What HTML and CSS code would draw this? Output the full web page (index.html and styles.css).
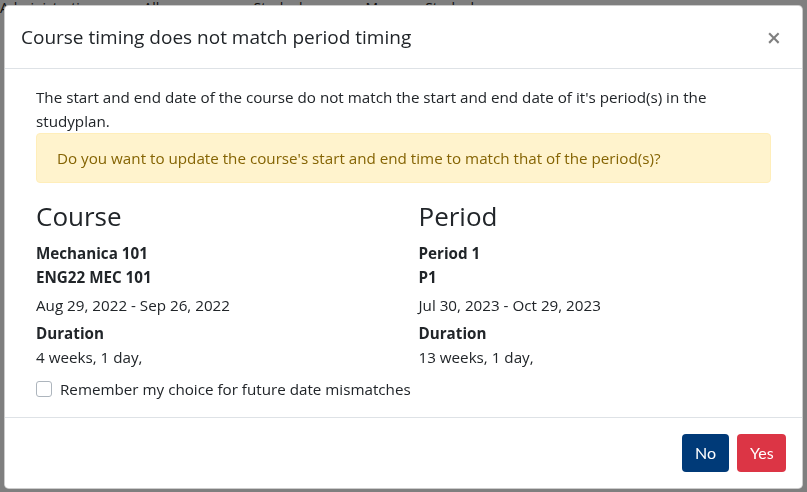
FILE: index.html
```html
<!DOCTYPE html>
<html>
<head>
<meta charset="utf-8">
<link rel="stylesheet" href="styles.css">
</head>
<body>
<div class="page">
  <nav class="nav">
    <span>Administrations</span><span>All courses</span><span>Studyplans</span><span>My</span><span>Studyplan</span>
  </nav>
  <div class="page-content">
    <div class="chip green"></div><div class="chip gold"></div><div class="chip green"></div><div class="chip purple"></div>
  </div>
</div>
<div class="backdrop"></div>
<div class="modal">
  <div class="modal-content">
    <div class="modal-header">
      <h5 class="modal-title">Course timing does not match period timing</h5>
      <button class="close" type="button">&times;</button>
    </div>
    <div class="modal-body">
      <div class="container">
        <p class="intro">The start and end date of the course do not match the start and end date of it's period(s) in the studyplan.</p>
        <div class="alert">Do you want to update the course's start and end time to match that of the period(s)?</div>
        <div class="row">
          <div class="col">
            <h3 class="col-title">Course</h3>
            <div class="strong">Mechanica 101</div>
            <div class="strong">ENG22 MEC 101</div>
            <div class="dates">Aug 29, 2022 - Sep 26, 2022</div>
            <div class="strong label">Duration</div>
            <div>4 weeks, 1 day,</div>
          </div>
          <div class="col">
            <h3 class="col-title">Period</h3>
            <div class="strong">Period 1</div>
            <div class="strong">P1</div>
            <div class="dates">Jul 30, 2023 - Oct 29, 2023</div>
            <div class="strong label">Duration</div>
            <div>13 weeks, 1 day,</div>
          </div>
        </div>
        <label class="check"><span class="box"></span>Remember my choice for future date mismatches</label>
      </div>
    </div>
    <div class="modal-footer">
      <button class="btn btn-no" type="button">No</button>
      <button class="btn btn-yes" type="button">Yes</button>
    </div>
  </div>
</div>
</body>
</html>
```

FILE: styles.css
```css
* { box-sizing: border-box; }
html, body { margin: 0; padding: 0; }
body {
  width: 807px;
  height: 492px;
  overflow: hidden;
  font-family: "Open Sans", "Noto Sans", sans-serif;
  font-size: 15.2px;
  line-height: 24px;
  color: #212529;
  background: #fff;
}
.page { height: 492px; position: relative; }
.nav {
  display: flex;
  gap: 40px;
  padding: 0 0 0 0;
  font-size: 14px;
  color: #222;
  line-height: 16px;
}
.page-content {
  display: flex;
  gap: 80px;
  padding-top: 450px;
  padding-left: 12px;
}
.chip { width: 10px; height: 6px; }
.chip.green { background: #0a8a2e; }
.chip.gold { background: #d9a400; width: 40px; }
.chip.purple { background: #3b1a9a; }
.backdrop {
  position: fixed;
  inset: 0;
  background: rgba(0,0,0,0.5);
}
.modal {
  position: fixed;
  left: 4px;
  top: 5px;
  width: 799px;
}
.modal-content {
  background: #fff;
  border: 1px solid rgba(0,0,0,0.2);
  border-radius: 4.8px;
  display: flex;
  flex-direction: column;
}
.modal-header {
  display: flex;
  align-items: flex-start;
  justify-content: space-between;
  padding: 16px 16px;
  border-bottom: 1px solid #dee2e6;
}
.modal-title {
  margin: 0;
  font-size: 19px;
  font-weight: 400;
  line-height: 30px;
}
.close {
  border: 0;
  background: transparent;
  padding: 0;
  margin: 0 5px 0 0;
  font-family: "Open Sans", sans-serif;
  font-size: 25px;
  font-weight: 600;
  line-height: 30px;
  color: #000;
  opacity: 0.5;
}
.modal-body { padding: 16px; }
.container { padding: 0 15px; }
.intro { margin: 0; }
.alert {
  margin: 0 0 16px;
  padding: 12px 20px;
  background: #fff3cd;
  border: 1px solid #ffeeba;
  border-radius: 4px;
  color: #856404;
}
.row {
  display: grid;
  grid-template-columns: 1fr 1fr;
  margin: 0 -15px;
}
.col { padding: 0 15px; }
.col-title {
  margin: 0 0 8px;
  font-size: 26px;
  font-weight: 400;
  line-height: 34px;
}
.strong { font-weight: 700; }
.dates { margin-top: 4px; }
.label { margin-top: 4px; }
.check {
  display: flex;
  align-items: center;
  gap: 8px;
  margin-top: 8px;
}
.box {
  width: 16px;
  height: 16px;
  border: 1px solid #adb5bd;
  border-radius: 3px;
  background: #fff;
}
.modal-footer {
  display: flex;
  justify-content: flex-end;
  align-items: center;
  gap: 8px;
  padding: 16px;
  border-top: 1px solid #dee2e6;
}
.btn {
  border: 1px solid transparent;
  border-radius: 4px;
  padding: 6px 12px;
  font-family: "Lato", sans-serif;
  font-size: 16px;
  line-height: 24px;
  color: #fff;
  height: 38px;
}
.btn-no { background: #003a78; width: 47px; }
.btn-yes { background: #dc3545; width: 49px; }
```
